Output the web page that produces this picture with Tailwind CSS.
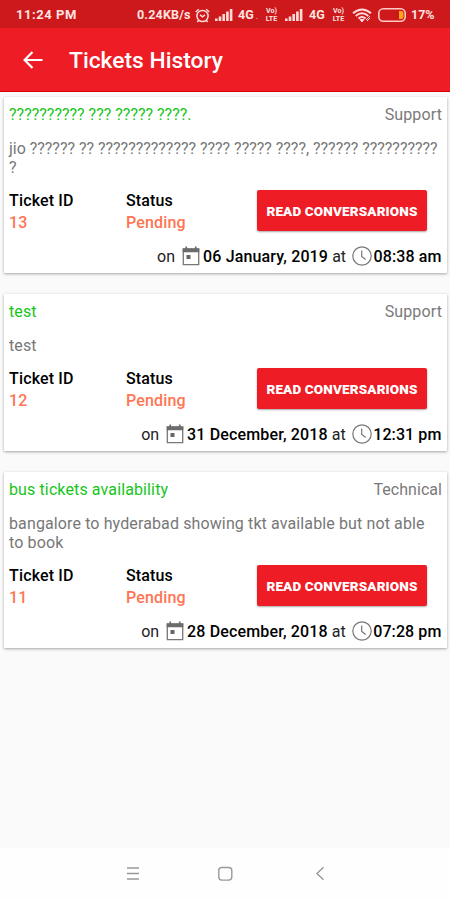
<!DOCTYPE html>
<html lang="en">
<head>
<meta charset="utf-8">
<title>Tickets History</title>
<script src="https://cdn.jsdelivr.net/npm/@tailwindcss/browser@4"></script>
</head>
<body class="bg-[#fafafa]">
<svg class="hidden">
  <symbol id="cal" viewBox="0 0 18 20"><path d="M1.3 3h15.400v15.700H1.300z" fill="none" stroke="#777" stroke-width="1.300"/><path d="M.7 2.400h16.600v3.800H.7zM3.400.6h1.700v2H3.400zM12.900.6h1.700v2h-1.700z" fill="#6c6c6c"/><path d="M4.500 9h4v4h-4z" fill="#666"/></symbol>
  <symbol id="clock" viewBox="0 0 20 20"><circle cx="10" cy="10" r="9.200" fill="none" stroke="#777" stroke-width="1.200"/><path d="M9.700 4.500v6l4 3" fill="none" stroke="#777" stroke-width="1.200"/></symbol>
  <symbol id="signal" viewBox="0 0 18 12"><path d="M0 9.500h2.600V12H0zM3.700 7.500h2.600V12H3.700zM7.400 5h2.600v7H7.400zM11.100 2.500h2.600V12h-2.600zM14.800 0h2.600v12h-2.600z" fill="#ffdcd8"/></symbol>
</svg>
<div class="flex h-[900px] w-[450px] flex-col overflow-hidden bg-[#fafafa] font-['Roboto',sans-serif] text-[16px] leading-[19px]">
  <div class="flex h-7 shrink-0 items-center bg-[#cd181c] pt-[2px] pl-4 text-[12.5px] leading-[14px] font-bold text-[#ffe4e0]">
    <span class="w-[121px] text-[13px] tracking-[0.55px] whitespace-nowrap">11:24 PM</span>
    <span class="w-[58px] tracking-[0.2px] whitespace-nowrap">0.24KB/s</span>
    <svg class="h-[15px] w-[15px]" viewBox="0 0 15 15" fill="none" stroke="#ffdcd8" stroke-width="1.500"><circle cx="7.500" cy="8" r="5.600"/><path d="M.8 4l3-2.700M14.200 4l-3-2.700M3.500 12.500L2.300 14M11.500 12.500l1.200 1.500M5 6.800l2.500 2L10 6.800"/></svg>
    <svg class="ml-[5px] h-3 w-[18px]"><use href="#signal"/></svg>
    <span class="ml-[5px] flex w-[26px] items-baseline gap-[2px] whitespace-nowrap">4G<span class="text-[8px] leading-[8px] opacity-60">.</span></span>
    <span class="w-[15px] text-center text-[7px] leading-[8px]">Vo)<br>LTE</span>
    <svg class="ml-[6px] h-3 w-[18px]"><use href="#signal"/></svg>
    <span class="ml-[6px] w-[22px]">4G</span>
    <span class="w-[15px] text-center text-[7px] leading-[8px]">Vo)<br>LTE</span>
    <svg class="ml-[6px] h-[14px] w-[20px]" viewBox="0 0 20 14" fill="none" stroke="#ffdcd8" stroke-width="1.900"><path d="M1 5.200q9-7.500 18 0M3.700 8q6.300-5.300 12.600 0M6.400 10.500q3.600-3 7.200 0"/><path d="M8 11.500h4L10 14zM14 12l4-4M15 13l3-3" fill="#ffdcd8" stroke-width="1"/></svg>
    <svg class="ml-[6px] h-[14px] w-[28px]" viewBox="0 0 28 14"><rect x=".8" y=".8" width="26.400" height="12.400" rx="4.500" fill="none" stroke="#ffc9c5" stroke-width="1.600"/><path d="M21 3h2.500q2 0 2 2v4q0 2-2 2H21z" fill="#ffa31a"/></svg>
    <span class="ml-[5px]">17%</span>
  </div>
  <div class="flex h-16 shrink-0 items-center border-b border-[#d80000] bg-[#ee1c24] pl-[23px]">
    <svg class="h-[18px] w-5" viewBox="0 0 20 18" fill="none" stroke="#fff" stroke-width="2.200"><path d="M19.500 9H2M9.500.9L1.600 9l7.900 8.100"/></svg>
    <h1 class="ml-[26px] pt-[3px] text-[22.800px] leading-[26px] font-medium text-white">Tickets History</h1>
  </div>

  <main class="flex grow flex-col gap-[21px] bg-[#fafafa] pt-[5px] pr-[3px] pl-1">
    <article class="h-[176px] rounded-[1px] bg-white px-[5px] pt-2 shadow-[0_1px_3px_rgba(0,0,0,0.35)]">
      <div class="flex justify-between"><span class="text-[#18c520]">?????????? ??? ????? ????.</span><span class="tracking-[0.12px] text-[#7a7a7a]">Support</span></div>
      <p class="mt-[15px] tracking-[-0.020px] text-[#777]">jio ?????? ?? ????????????? ???? ????? ????, ?????? ??????????<br>?</p>
      <div class="mt-[13px] flex h-[41px] tracking-[0.150px]">
        <div class="w-[117px] pt-px font-medium text-black">Ticket ID<div class="mt-[3px] text-[#ff7553]">13</div></div>
        <div class="w-[131px] pt-px font-medium text-black">Status<div class="mt-[3px] text-[#ff7553]">Pending</div></div>
        <button class="h-[41px] w-[170px] rounded-[2px] bg-[#ee1c24] pt-[2px] text-[13.500px] font-black tracking-[0.150px] whitespace-nowrap text-white shadow-[0_1px_2px_rgba(0,0,0,0.35)]">READ CONVERSARIONS</button>
      </div>
      <div class="mt-[15px] flex h-5 items-center justify-end pr-[0.500px] whitespace-nowrap text-[#222]"><span>on</span><svg class="ml-[7px] h-5 w-[18px]"><use href="#cal"/></svg><b class="ml-[3px] font-medium tracking-[0.150px] text-black">06 January, 2019</b><span class="ml-1">at</span><svg class="ml-[6px] h-5 w-5"><use href="#clock"/></svg><b class="ml-[1.500px] font-medium tracking-[0.100px] text-black">08:38 am</b></div>
    </article>
    <article class="h-[157px] rounded-[1px] bg-white px-[5px] pt-2 shadow-[0_1px_3px_rgba(0,0,0,0.35)]">
      <div class="flex justify-between tracking-[0.120px]"><span class="text-[#18c520]">test</span><span class="text-[#7a7a7a]">Support</span></div>
      <p class="mt-[15px] tracking-[0.120px] text-[#777]">test</p>
      <div class="mt-[13px] flex h-[41px] tracking-[0.150px]">
        <div class="w-[117px] pt-px font-medium text-black">Ticket ID<div class="mt-[3px] text-[#ff7553]">12</div></div>
        <div class="w-[131px] pt-px font-medium text-black">Status<div class="mt-[3px] text-[#ff7553]">Pending</div></div>
        <button class="h-[41px] w-[170px] rounded-[2px] bg-[#ee1c24] pt-[2px] text-[13.500px] font-black tracking-[0.150px] whitespace-nowrap text-white shadow-[0_1px_2px_rgba(0,0,0,0.35)]">READ CONVERSARIONS</button>
      </div>
      <div class="mt-[15px] flex h-5 items-center justify-end pr-[0.500px] whitespace-nowrap text-[#222]"><span>on</span><svg class="ml-[7px] h-5 w-[18px]"><use href="#cal"/></svg><b class="ml-[3px] font-medium tracking-[0.150px] text-black">31 December, 2018</b><span class="ml-1">at</span><svg class="ml-[6px] h-5 w-5"><use href="#clock"/></svg><b class="ml-[1.500px] font-medium tracking-[0.100px] text-black">12:31 pm</b></div>
    </article>
    <article class="h-[176px] rounded-[1px] bg-white px-[5px] pt-2 shadow-[0_1px_3px_rgba(0,0,0,0.35)]">
      <div class="flex justify-between tracking-[0.120px]"><span class="text-[#18c520]">bus tickets availability</span><span class="tracking-[0.050px] text-[#7a7a7a]">Technical</span></div>
      <p class="mt-[15px] tracking-[0.120px] text-[#777]">bangalore to hyderabad showing tkt available but not able<br>to book</p>
      <div class="mt-[13px] flex h-[41px] tracking-[0.150px]">
        <div class="w-[117px] pt-px font-medium text-black">Ticket ID<div class="mt-[3px] text-[#ff7553]">11</div></div>
        <div class="w-[131px] pt-px font-medium text-black">Status<div class="mt-[3px] text-[#ff7553]">Pending</div></div>
        <button class="h-[41px] w-[170px] rounded-[2px] bg-[#ee1c24] pt-[2px] text-[13.500px] font-black tracking-[0.150px] whitespace-nowrap text-white shadow-[0_1px_2px_rgba(0,0,0,0.35)]">READ CONVERSARIONS</button>
      </div>
      <div class="mt-[15px] flex h-5 items-center justify-end pr-[0.500px] whitespace-nowrap text-[#222]"><span>on</span><svg class="ml-[7px] h-5 w-[18px]"><use href="#cal"/></svg><b class="ml-[3px] font-medium tracking-[0.150px] text-black">28 December, 2018</b><span class="ml-1">at</span><svg class="ml-[6px] h-5 w-5"><use href="#clock"/></svg><b class="ml-[1.500px] font-medium tracking-[0.100px] text-black">07:28 pm</b></div>
    </article>
  </main>

  <nav class="flex h-[52px] shrink-0 items-center bg-[#fefefe] pl-[126px]">
    <svg class="h-4 w-[14px]" viewBox="0 0 14 16" fill="none" stroke="#999" stroke-width="1.300"><path d="M1 2h12M1 7.500h12M1 13h12"/></svg>
    <svg class="ml-[77px] h-4 w-4" viewBox="0 0 16 16" fill="none" stroke="#999" stroke-width="1.400"><rect x="1.800" y="1.500" width="13" height="12.600" rx="3"/></svg>
    <svg class="ml-[82px] h-4 w-[10px]" viewBox="0 0 10 16" fill="none" stroke="#999" stroke-width="1.400"><path d="M8.500 1.200L2 7.500l6.500 6.300"/></svg>
  </nav>
</div>
</body>
</html>
